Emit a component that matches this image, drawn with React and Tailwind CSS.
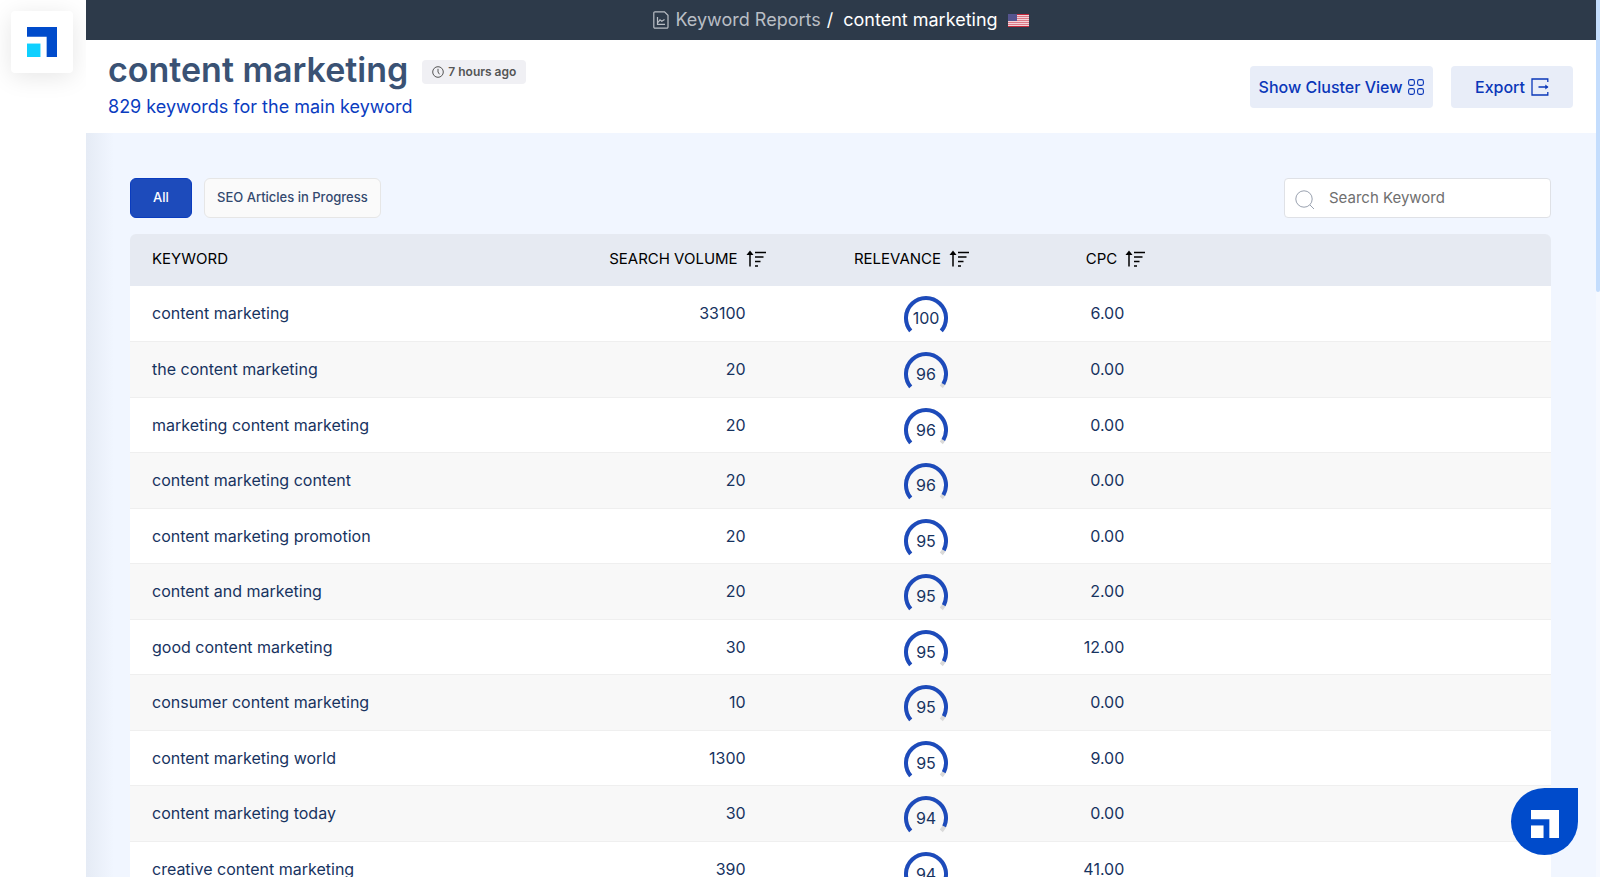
const rows = [
  { keyword: 'content marketing', volume: 33100, relevance: 100, cpc: '6.00' },
  { keyword: 'the content marketing', volume: 20, relevance: 96, cpc: '0.00' },
  { keyword: 'marketing content marketing', volume: 20, relevance: 96, cpc: '0.00' },
  { keyword: 'content marketing content', volume: 20, relevance: 96, cpc: '0.00' },
  { keyword: 'content marketing promotion', volume: 20, relevance: 95, cpc: '0.00' },
  { keyword: 'content and marketing', volume: 20, relevance: 95, cpc: '2.00' },
  { keyword: 'good content marketing', volume: 30, relevance: 95, cpc: '12.00' },
  { keyword: 'consumer content marketing', volume: 10, relevance: 95, cpc: '0.00' },
  { keyword: 'content marketing world', volume: 1300, relevance: 95, cpc: '9.00' },
  { keyword: 'content marketing today', volume: 30, relevance: 94, cpc: '0.00' },
  { keyword: 'creative content marketing', volume: 390, relevance: 94, cpc: '41.00' },
]

const Logo = ({ className, corner, square }) => (
  <svg viewBox="0 0 29 29" className={className} aria-hidden="true">
    <path d="M0 0h29v29H19V9.5H0z" fill={corner} />
    <path d="M0 16h13v13H0z" fill={square} />
  </svg>
)

const ReportIcon = () => (
  <svg viewBox="0 0 16 18" className="w-4 h-[18px]" fill="none" stroke="currentColor" strokeWidth="1.2" aria-hidden="true">
    <path d="M2 .8h9.5L15 4.2V16a1.2 1.2 0 0 1-1.2 1.2H2A1.2 1.2 0 0 1 .8 16V2A1.2 1.2 0 0 1 2 .8z" />
    <path d="M4.5 6v7.3H12M5 11.5l2-2.7 1.8 1.4L11.5 8.5" />
  </svg>
)

const Flag = () => (
  <svg viewBox="0 0 21 13" className="w-[21px] h-[13px]" aria-label="United States">
    <path fill="#f3d3d8" d="M0 0h21v13H0z" />
    <path stroke="#dc7886" d="M0 2.5h21M0 4.5h21M0 6.5h21M0 8.5h21M0 10.5h21" />
    <path stroke="#c8283c" d="M0 .5h21M0 12.5h21" />
    <path fill="#55548f" d="M0 0h9v7H0z" />
  </svg>
)

const ClockIcon = () => (
  <svg viewBox="0 0 12 12" className="size-3" fill="none" stroke="currentColor" aria-hidden="true">
    <circle cx="6" cy="6" r="5.3" />
    <path d="M6 2.8V6l1.5 2.3" />
  </svg>
)

const ClusterIcon = () => (
  <svg viewBox="0 0 16 16" className="size-4" fill="none" stroke="currentColor" strokeWidth="1.1" aria-hidden="true">
    <rect x=".6" y=".6" width="5.8" height="5.8" rx="1.8" />
    <rect x="9.6" y=".6" width="5.8" height="5.8" rx="1.8" />
    <rect x=".6" y="9.6" width="5.8" height="5.8" rx="1.8" />
    <rect x="9.6" y="9.6" width="5.8" height="5.8" rx="1.8" />
  </svg>
)

const ExportIcon = () => (
  <svg viewBox="0 0 18 18" className="size-[18px]" fill="none" stroke="currentColor" strokeWidth="1.3" aria-hidden="true">
    <path d="M16.8 4V1H1v16h15.8v-3M7.5 9h9" />
    <path d="M14.3 6.5 17.5 9l-3.2 2.500z" fill="currentColor" stroke="none" />
  </svg>
)

const SearchIcon = () => (
  <svg viewBox="0 0 20 20" className="mt-1 size-5 text-gray-400" fill="none" stroke="currentColor" aria-hidden="true">
    <circle cx="9" cy="9" r="8.2" />
    <path d="m15 15 4 4" />
  </svg>
)

const SortIcon = () => (
  <svg viewBox="0 0 20 18" className="w-5 h-[18px]" fill="none" stroke="currentColor" strokeWidth="1.5" aria-hidden="true">
    <path d="M4 16.500V2M9 2.500h11M9 7h8.500M9 11.500h5.500M9 16h3" />
    <path d="M4 .5 7.500 5h-7z" fill="currentColor" stroke="none" />
  </svg>
)

const Gauge = ({ value }) => (
  <div className="relative flex size-11 items-center justify-center">
    <svg viewBox="0 0 44 44" className="absolute inset-0 size-11" fill="none" strokeWidth="4" aria-hidden="true">
      <path d="M6.7 34.9A20 20 0 1 1 37.3 34.9" stroke="#d9d9d9" />
      <path d="M6.7 34.9A20 20 0 1 1 37.3 34.9" stroke="#1d4bbb" pathLength="100" strokeDasharray={`${value} 100`} />
    </svg>
    <span>{value}</span>
  </div>
)

const SortButton = ({ label }) => (
  <button type="button" className="inline-flex items-center gap-2 whitespace-nowrap">
    {label}
    <SortIcon />
  </button>
)

const App = () => {
  return (
    <div className="flex h-screen overflow-hidden bg-white font-['Inter',sans-serif] text-base text-[#17335f]">
      {/* Sidebar */}
      <aside className="w-[86px] shrink-0 p-[11px]">
        <a href="#" aria-label="Home" className="flex size-[62px] items-center justify-center rounded-sm bg-white shadow-[0_4px_24px_rgba(0,0,0,0.1)]">
          <Logo className="size-[30px]" corner="#004bcb" square="#0fd0ff" />
        </a>
      </aside>

      <div className="relative flex min-w-0 flex-1 flex-col">
        {/* Breadcrumb */}
        <nav className="flex h-10 shrink-0 items-center justify-center bg-[#2d3a4a] text-lg text-white">
          <a href="#" className="flex items-center gap-1.5 text-[#b9bec5]">
            <ReportIcon />
            Keyword Reports
          </a>
          <span className="px-1.5">/</span>
          <span className="px-1">content marketing</span>
          <span className="pl-1.5"><Flag /></span>
        </nav>

        {/* Header */}
        <header className="flex h-[93px] shrink-0 items-center justify-between bg-white pl-[22px] pr-[23px]">
          <div className="flex flex-col gap-[3px] pb-[3px]">
            <div className="flex items-center gap-3.5">
              <h1 className="text-[34px] leading-10 font-semibold text-[#3a5274]">content marketing</h1>
              <span className="mt-1 flex h-6 items-center gap-1 rounded-sm bg-[#f0f0f4] px-2.5 text-xs font-semibold text-[#555]">
                <ClockIcon />
                7 hours ago
              </span>
            </div>
            <p className="text-lg text-[#0a3cbf]">829 keywords for the main keyword</p>
          </div>
          <div className="flex gap-[18px] font-medium text-[#0a37b8]">
            <button type="button" className="flex h-[42px] w-[183px] items-center justify-center gap-1.5 rounded-sm bg-[#e8edf8]">
              Show Cluster View
              <ClusterIcon />
            </button>
            <button type="button" className="flex h-[42px] w-[122px] items-center justify-center gap-1.5 rounded-sm bg-[#e8edf8]">
              Export
              <ExportIcon />
            </button>
          </div>
        </header>

        {/* Keywords */}
        <main className="flex-1 bg-[linear-gradient(to_right,#e5ebf5_0,#f1f6ff_28px)] pt-[45px] pr-[45px] pl-11">
          <div className="flex items-center justify-between">
            <div className="flex gap-3 text-[13px] font-medium">
              <button type="button" className="h-10 w-[62px] rounded-md border border-[#0a3cbf] bg-[#1d4bbb] text-white">
                All
              </button>
              <button type="button" className="h-10 rounded-md border border-[#e6e6e6] bg-[#fafafa] px-3 text-[#33496f]">
                SEO Articles in Progress
              </button>
            </div>
            <label className="flex h-10 w-[267px] items-center gap-3.5 rounded-sm border border-[#dfe1e6] bg-white px-2.5">
              <SearchIcon />
              <input type="search" aria-label="Search Keyword" placeholder="Search Keyword" className="min-w-0 flex-1 text-[15px] outline-none placeholder:text-[#6f6f6f]" />
            </label>
          </div>

          <table className="mt-4 w-full table-fixed">
            <thead>
              <tr className="h-[52px] text-[15px] text-black">
                <th scope="col" className="w-[33%] rounded-tl-md bg-[#e6eaf2] pb-0.5 pl-[22px] text-left font-normal">KEYWORD</th>
                <th scope="col" className="w-[13%] bg-[#e6eaf2] pb-0.5 pr-[18px] text-right font-normal"><SortButton label="SEARCH VOLUME" /></th>
                <th scope="col" className="w-[18%] bg-[#e6eaf2] pb-0.5 text-center font-normal"><SortButton label="RELEVANCE" /></th>
                <th scope="col" className="w-[9%] bg-[#e6eaf2] pb-0.5 pr-[22px] text-right font-normal"><SortButton label="CPC" /></th>
                <td className="rounded-tr-md bg-[#e6eaf2]" />
              </tr>
            </thead>
            <tbody>
              {rows.map(row => (
                <tr key={row.keyword} className="border-b border-[#efefef] odd:h-[55px] odd:bg-white even:h-14 even:bg-[#f8f8f8]">
                  <td className="pl-[22px]">{row.keyword}</td>
                  <td className="pr-[38px] text-right">{row.volume}</td>
                  <td className="pt-2.5 pl-[29px]">
                    <div className="flex justify-center">
                      <Gauge value={row.relevance} />
                    </div>
                  </td>
                  <td className="pr-[43px] text-right">{row.cpc}</td>
                  <td />
                </tr>
              ))}
            </tbody>
          </table>
        </main>

        {/* Chat button */}
        <button type="button" aria-label="Open chat" className="absolute right-[18px] bottom-[22px] flex size-[67px] items-center justify-center rounded-full rounded-tr-sm bg-[#004bcb] pt-1">
          <Logo className="size-7" corner="#fff" square="#fff" />
        </button>
      </div>

      {/* Scroll track */}
      <div className="w-1 shrink-0 bg-[#f6f9ff]">
        <div className="h-1/3 rounded-b-full bg-[#c4ddfd]" />
      </div>
    </div>
  )
}

export default App
